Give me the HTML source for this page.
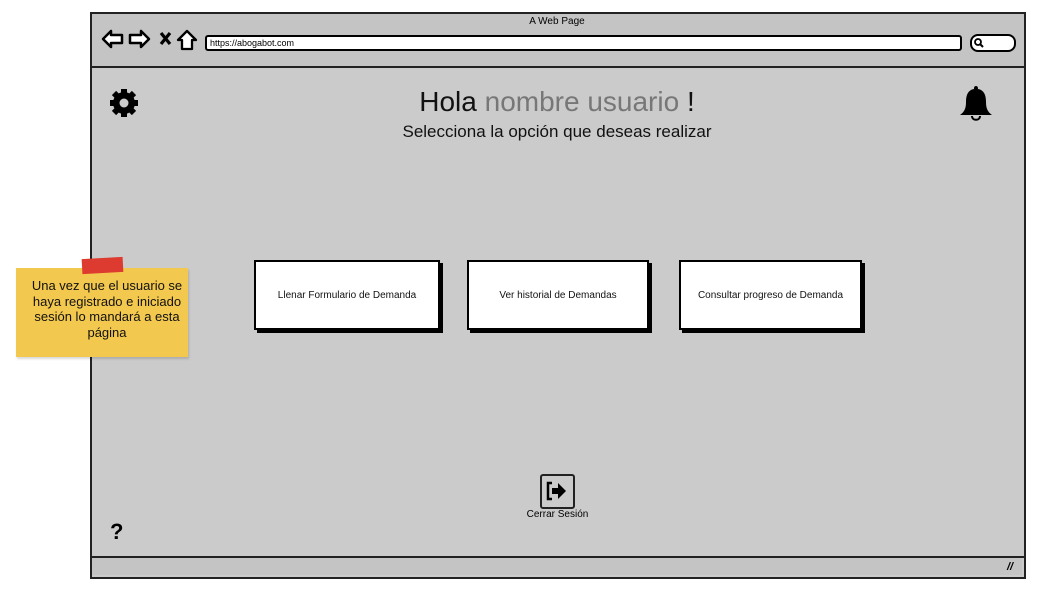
<!DOCTYPE html>
<html><head><meta charset="utf-8"><style>
body{margin:0;width:1050px;height:599px;background:#fff;position:relative;font-family:"Liberation Sans",sans-serif;overflow:hidden}
.a{position:absolute}
.btn{position:absolute;top:260px;height:66px;background:#fff;border:2px solid #000;box-shadow:3px 3px 0 #000;font-size:10px;display:flex;align-items:center;justify-content:center;color:#111}
</style></head><body>
<div class="a" style="left:90px;top:12px;width:932px;height:563px;background:#cbcbcb;border:2px solid #222;"></div>
<div class="a" style="left:92px;top:14px;width:932px;height:52px;background:#c4c4c4;border-bottom:2px solid #222"></div>
<div class="a" style="left:92px;top:16px;width:930px;text-align:center;font-size:10px">A Web Page</div>
<svg class="a" style="left:100px;top:28px" width="100" height="24">
<path d="M3 11 L11 3 L11 7 L22 7 L22 15 L11 15 L11 19 Z" fill="#fff" stroke="#000" stroke-width="2.5" stroke-linejoin="round"/>
<path d="M49 11 L41 3 L41 7 L30 7 L30 15 L41 15 L41 19 Z" fill="#fff" stroke="#000" stroke-width="2.5" stroke-linejoin="round"/>
<path d="M61 5 L70 16 M70 5 L61 16" stroke="#000" stroke-width="3.2"/>
<path d="M78 12 L87 3 L96 12 L92 12 L92 21 L82 21 L82 12 Z" fill="#fff" stroke="#000" stroke-width="2.3" stroke-linejoin="round"/>
</svg>
<div class="a" style="left:205px;top:35px;width:750px;height:12px;background:#fff;border:2px solid #000;border-radius:3px;font-size:9px;line-height:12px;padding-left:3px">https://abogabot.com</div>
<div class="a" style="left:970px;top:34px;width:42px;height:14px;background:#fff;border:2px solid #000;border-radius:8px"></div>
<svg class="a" style="left:973px;top:37px" width="12" height="12"><circle cx="5" cy="5" r="3" fill="none" stroke="#000" stroke-width="1.8"/><path d="M7 7 L10 10" stroke="#000" stroke-width="2"/></svg>
<svg class="a" style="left:108px;top:87px" width="32" height="32" viewBox="0 0 32 32">
<g fill="#000"><circle cx="16" cy="16" r="11"/>
<g stroke="#000" stroke-width="6"><path d="M16 2V30M2 16H30M6 6L26 26M26 6L6 26"/></g></g>
<circle cx="16" cy="16" r="4.5" fill="#cbcbcb"/></svg>
<svg class="a" style="left:957px;top:84px" width="38" height="40" viewBox="0 0 38 40">
<path d="M19 2 C21 2 21 4 21 5 C27 6 29 11 29 18 C29 25 31 28 35 31 L3 31 C7 28 9 25 9 18 C9 11 11 6 17 5 C17 4 17 2 19 2Z" fill="#000"/>
<path d="M15 32 C15 37 23 37 23 32" fill="none" stroke="#000" stroke-width="2"/></svg>
<div class="a" style="left:92px;top:86px;width:930px;text-align:center;font-size:28px;color:#111">Hola <span style="color:#777">nombre usuario</span> !</div>
<div class="a" style="left:92px;top:122px;width:930px;text-align:center;font-size:17px;color:#111">Selecciona la opción que deseas realizar</div>
<div class="btn" style="left:254px;width:182px">Llenar Formulario de Demanda</div>
<div class="btn" style="left:467px;width:178px">Ver historial de Demandas</div>
<div class="btn" style="left:679px;width:179px">Consultar progreso de Demanda</div>
<div class="a" style="left:16px;top:268px;width:172px;height:89px;background:#f3c84e;box-shadow:1px 2px 2px rgba(0,0,0,.15)"></div>
<div class="a" style="left:82px;top:258px;width:41px;height:15px;background:#dd3b2f;transform:rotate(-3deg)"></div>
<div class="a" style="left:24px;top:278px;width:166px;text-align:center;font-size:13px;line-height:15.5px;color:#111">Una vez que el usuario se haya registrado e iniciado sesión lo mandará a esta página</div>
<div class="a" style="left:540px;top:474px;width:31px;height:31px;border:2px solid #222;border-radius:3px;background:#cbcbcb"></div>
<svg class="a" style="left:545px;top:480px" width="24" height="22"><path d="M7 3 H3 V19 H7" fill="none" stroke="#000" stroke-width="2.5"/><path d="M7 8 H13 V3 L21 11 L13 19 V14 H7 Z" fill="#000"/></svg>
<div class="a" style="left:520px;top:509px;width:75px;text-align:center;font-size:10px">Cerrar Sesión</div>
<div class="a" style="left:110px;top:519px;font-size:22px;font-weight:bold">?</div>
<div class="a" style="left:92px;top:556px;width:932px;height:2px;background:#222"></div>
<div class="a" style="left:92px;top:558px;width:930px;height:17px;background:#c4c4c4"></div>
<div class="a" style="left:1007px;top:561px;font-size:11px;font-weight:bold;font-style:italic">//</div>
</body></html>
